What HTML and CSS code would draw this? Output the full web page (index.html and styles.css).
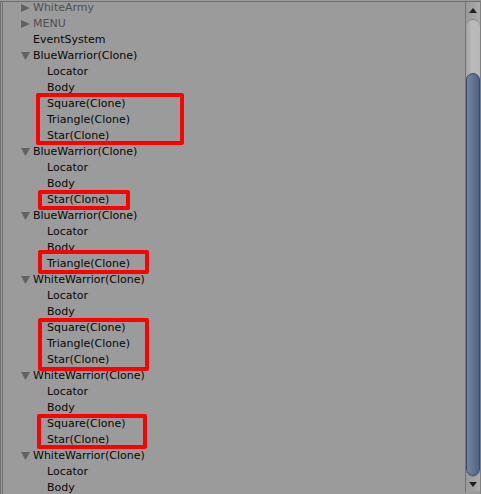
FILE: index.html
```
<!DOCTYPE html>
<html lang="en">
<head>
<meta charset="utf-8">
<title>Hierarchy</title>
<link rel="stylesheet" href="styles.css">
</head>
<body>
<main class="panel">
  <div class="tree">
    <ul class="rows">
      <li class="row root inactive"><button class="fold closed" aria-label="Expand"></button>WhiteArmy</li>
      <li class="row root inactive"><button class="fold closed" aria-label="Expand"></button>MENU</li>
      <li class="row root"><span class="fold"></span>EventSystem</li>
      <li class="row root"><button class="fold open" aria-label="Collapse"></button>BlueWarrior(Clone)</li>
      <li class="row child">Locator</li>
      <li class="row child">Body</li>
      <li class="row child">Square(Clone)</li>
      <li class="row child">Triangle(Clone)</li>
      <li class="row child">Star(Clone)</li>
      <li class="row root"><button class="fold open" aria-label="Collapse"></button>BlueWarrior(Clone)</li>
      <li class="row child">Locator</li>
      <li class="row child">Body</li>
      <li class="row child">Star(Clone)</li>
      <li class="row root"><button class="fold open" aria-label="Collapse"></button>BlueWarrior(Clone)</li>
      <li class="row child">Locator</li>
      <li class="row child">Body</li>
      <li class="row child">Triangle(Clone)</li>
      <li class="row root"><button class="fold open" aria-label="Collapse"></button>WhiteWarrior(Clone)</li>
      <li class="row child">Locator</li>
      <li class="row child">Body</li>
      <li class="row child">Square(Clone)</li>
      <li class="row child">Triangle(Clone)</li>
      <li class="row child">Star(Clone)</li>
      <li class="row root"><button class="fold open" aria-label="Collapse"></button>WhiteWarrior(Clone)</li>
      <li class="row child">Locator</li>
      <li class="row child">Body</li>
      <li class="row child">Square(Clone)</li>
      <li class="row child">Star(Clone)</li>
      <li class="row root"><button class="fold open" aria-label="Collapse"></button>WhiteWarrior(Clone)</li>
      <li class="row child">Locator</li>
      <li class="row child">Body</li>
    </ul>
    <div class="mark mark-a"></div>
    <div class="mark mark-b"></div>
    <div class="mark mark-c"></div>
    <div class="mark mark-d"></div>
    <div class="mark mark-e"></div>
  </div>
  <div class="scrollbar">
    <button class="step up" aria-label="Scroll up"><svg width="8" height="5" viewBox="0 0 8 5"><path d="M4 0 8 5H0z"/></svg></button>
    <div class="track"><div class="thumb"></div></div>
    <button class="step down" aria-label="Scroll down"><svg width="8" height="5" viewBox="0 0 8 5"><path d="M0 0h8L4 5z"/></svg></button>
  </div>
</main>
</body>
</html>
```
FILE: styles.css
```
* {
  box-sizing: border-box;
}

body {
  margin: 0;
  background: #9b9b9b;
  color: #080808;
  font: 11px/16px "DejaVu Sans", Verdana, sans-serif;
}

button {
  padding: 0;
  border: 0;
  background: none;
}

.panel {
  display: flex;
  height: 100vh;
  overflow: hidden;
  background: #9b9b9b;
  border-top: 1px solid #9b9b9b;
  border-right: 1px solid #808080;
}

.tree {
  position: relative;
  flex: 1;
  overflow: hidden;
  border-top: 1px solid #6e6e6e;
  border-left: 3px double #6e6e6e;
}

.rows {
  margin: -2px 0 0;
  padding: 0;
  list-style: none;
}

.row {
  display: flex;
  align-items: center;
  height: 16px;
  white-space: nowrap;
}

.root {
  padding-left: 18px;
}

.child {
  padding-left: 44px;
}

.inactive {
  color: #505050;
}

.fold {
  width: 12px;
  height: 8px;
}

.fold::before {
  display: block;
  height: 8px;
  background: #626262;
}

.closed::before {
  content: "";
  width: 9px;
  clip-path: polygon(0 0, 100% 50%, 0 100%);
}

.open::before {
  content: "";
  width: 9px;
  clip-path: polygon(0 0, 100% 0, 50% 100%);
}

.mark {
  position: absolute;
  border: 4px solid #fe0000;
  border-radius: 2px;
}

.mark-a { left: 33px; top: 91px; width: 148px; height: 52px; }
.mark-b { left: 35px; top: 188px; width: 92px; height: 20px; }
.mark-c { left: 35px; top: 248px; width: 111px; height: 24px; }
.mark-d { left: 35px; top: 316px; width: 111px; height: 53px; }
.mark-e { left: 34px; top: 412px; width: 110px; height: 35px; }

.scrollbar {
  display: flex;
  flex-direction: column;
  width: 15px;
  border-top: 1px solid #6e6e6e;
  border-left: 1px solid #747474;
  border-bottom: 3px solid #9b9b9b;
  background: linear-gradient(90deg, #999999, #acacac);
}

.step {
  display: flex;
  align-items: center;
  justify-content: center;
  height: 17px;
  fill: #202020;
}

.down {
  height: 14px;
}

.track {
  flex: 1;
  padding-top: 53px;
  border: 1px solid #888888;
  border-width: 1px 0;
  border-radius: 7px;
  background: linear-gradient(90deg, #a2a2a2, #bababa 40%, #b8b8b8);
}

.thumb {
  height: 100%;
  border: 1px solid #38496a;
  border-radius: 7px;
  background: linear-gradient(90deg, #74849a, #667893 40%, #4d628a);
}
```
